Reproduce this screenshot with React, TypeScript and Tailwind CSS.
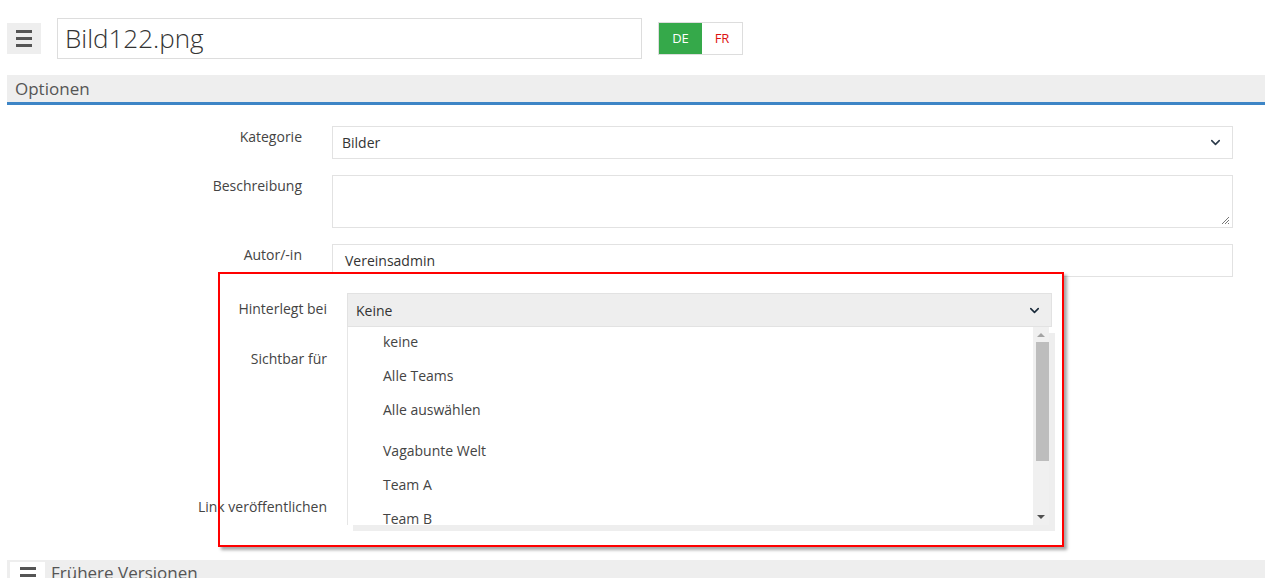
import { ChevronDown } from "lucide-react"

const FONT = "font-['Open_Sans','Liberation_Sans',sans-serif]"

function Burger({ className = "" }: { className?: string }) {
  return (
    <div className={`flex flex-col gap-[4px] ${className}`}>
      <span className="block h-[3px] w-[16px] bg-[#555]" />
      <span className="block h-[3px] w-[16px] bg-[#555]" />
      <span className="block h-[3px] w-[16px] bg-[#555]" />
    </div>
  )
}

// einfache Formularzeile: Label rechtsbündig, Feld rechts daneben
function Row({ label, children, className = "" }: {
  label: string; children: React.ReactNode; className?: string
}) {
  return (
    <div className={`flex ${className}`}>
      <label className="w-[325px] shrink-0 pr-[30px] pt-[1px] text-right text-[14px] leading-[20px] text-[#444]">
        {label}
      </label>
      <div className="flex-1 mr-[32px]">{children}</div>
    </div>
  )
}

const OPTIONS: { label: string; gap?: boolean }[] = [
  { label: "keine" },
  { label: "Alle Teams" },
  { label: "Alle auswählen" },
  { label: "Vagabunte Welt", gap: true },
  { label: "Team A" },
  { label: "Team B" },
]

export default function App() {
  return (
    <div className={`${FONT} h-[578px] overflow-hidden bg-white text-[#333]`}>
      {/* Kopfzeile */}
      <div className="flex items-center pl-[7px] pt-[18px]">
        <button className="flex h-[31px] w-[34px] items-center justify-center bg-[#eee]">
          <Burger />
        </button>
        <div className="ml-[16px] flex h-[41px] w-[585px] items-center border border-[#ddd] pl-[7px] text-[26px] font-light text-[#333]">
          Bild122.png
        </div>
        <div className="ml-[16px] flex h-[33px] border border-[#ddd] text-[13px]">
          <span className="flex w-[43px] items-center justify-center bg-[#35a94a] text-white">DE</span>
          <span className="flex w-[40px] items-center justify-center bg-white text-[#d11]">FR</span>
        </div>
      </div>

      {/* Optionen */}
      <div className="ml-[7px] mt-[16px] h-[30px] border-b-[3px] border-[#3d85c6] bg-[#eee] pl-[8px] text-[17px] leading-[27px] text-[#555]">
        Optionen
      </div>

      <div className="mt-[21px] flex flex-col gap-[16px] pl-[7px]">
        <Row label="Kategorie">
          <div className="flex h-[33px] items-center justify-between border border-[#e2e2e2] pl-[9px] pr-[9px] text-[14px]">
            <span>Bilder</span>
            <ChevronDown size={15} strokeWidth={2.5} className="text-[#2b3a4a]" />
          </div>
        </Row>
        <Row label="Beschreibung">
          <div className="relative h-[53px] border border-[#e2e2e2]">
            <svg className="absolute bottom-[2px] right-[2px]" width="9" height="9" viewBox="0 0 9 9">
              <path d="M8 1 L1 8 M8 4 L4 8 M8 7 L7 8" stroke="#777" strokeWidth="1" />
            </svg>
          </div>
        </Row>
        <Row label="Autor/-in">
          <div className="flex h-[33px] items-center border border-[#e2e2e2] pl-[12px] text-[14px]">
            Vereinsadmin
          </div>
        </Row>
      </div>

      {/* markierter Ausschnitt */}
      <div className="relative ml-[218px] mt-[-5px] h-[275px] w-[846px] bg-white">
        <div className="flex pt-[21px] pl-[2px]">
          <div className="w-[107px] shrink-0 pt-[6px] text-right text-[14px] leading-[20px] text-[#444]">Hinterlegt bei</div>
          <div className="ml-[20px] flex h-[34px] w-[705px] items-center justify-between border border-[#e2e2e2] bg-[#eee] pl-[8px] pr-[9px] text-[14px]">
            <span>Keine</span>
            <ChevronDown size={15} strokeWidth={2.5} className="text-[#1a2a3a]" />
          </div>
        </div>
        <div className="flex pl-[2px] pt-[22px]">
          <div className="w-[107px] shrink-0 text-right text-[14px] leading-[20px] text-[#444]">Sichtbar für</div>
        </div>
        <div className="flex pl-[2px] pt-[128px]">
          <div className="w-[107px] shrink-0 whitespace-nowrap text-right text-[14px] leading-[20px] text-[#444] [direction:rtl]">Link veröffentlichen</div>
        </div>

        {/* aufgeklappte Liste */}
        <div className="absolute left-[129px] top-[55px] flex h-[198px] w-[702px] border-l border-[#e6e6e6] bg-white shadow-[6px_6px_0_0_#eee]">
          <div className="flex-1 overflow-hidden pt-[1px]">
            {OPTIONS.map(o => (
              <div
                key={o.label}
                className={`h-[34px] pl-[35px] text-[14px] leading-[28px] text-[#444] ${o.gap ? "mt-[7px]" : ""}`}
              >
                {o.label}
              </div>
            ))}
          </div>
          <div className="flex w-[16px] flex-col items-center bg-[#f0f0f0]">
            <span className="mt-[6px] h-0 w-0 border-x-[4px] border-b-[4px] border-x-transparent border-b-[#a3a3a3]" />
            <span className="ml-[2px] mt-[5px] h-[119px] w-[13px] bg-[#bdbdbd]" />
            <span className="mt-auto mb-[6px] h-0 w-0 border-x-[4px] border-t-[4px] border-x-transparent border-t-[#505050]" />
          </div>
        </div>

        {/* roter Rahmen */}
        <div className="pointer-events-none absolute inset-0 border-2 border-[#f00] shadow-[3px_3px_3px_rgba(0,0,0,0.35)]" />
      </div>

      {/* Frühere Versionen */}
      <div className="ml-[7px] mt-[13px] flex h-[30px] items-start bg-[#eee] pl-[3px] pt-[2px]">
        <div className="flex h-[26px] w-[35px] items-start justify-center bg-white pt-[5px]">
          <Burger />
        </div>
        <span className="ml-[6px] text-[17px] leading-[22px] text-[#555]">Frühere Versionen</span>
      </div>
    </div>
  )
}
